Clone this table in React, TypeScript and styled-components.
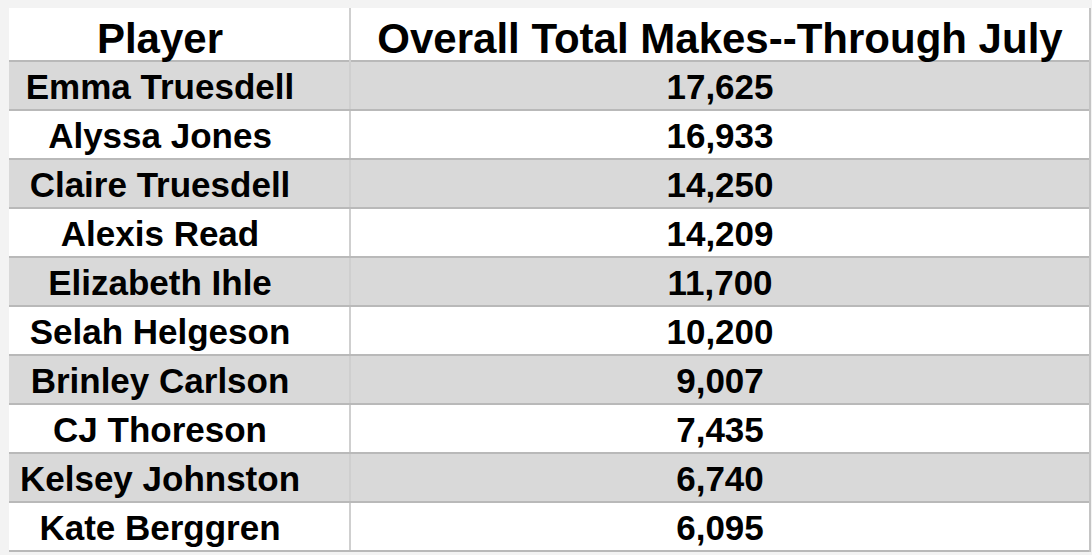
import React from "react";
import styled, { createGlobalStyle } from "styled-components";

const GlobalStyle = createGlobalStyle`
  html, body {
    margin: 0;
    padding: 0;
    background: #f3f3f3;
  }
  body {
    font-family: "Liberation Sans", Arial, sans-serif;
  }
`;

const Page = styled.div`
  width: 1092px;
  height: 555px;
  padding: 8px 1px 0 9px;
  box-sizing: border-box;
  overflow: hidden;
  background: #f3f3f3;
`;

const Sheet = styled.div`
  display: flex;
  flex-direction: column;
  border-right: 2px solid #c4c4c4;
  background: #ffffff;
`;

const Row = styled.div<{ $shaded?: boolean; $header?: boolean }>`
  display: grid;
  grid-template-columns: 342px 1fr;
  height: ${({ $header }) => ($header ? "54px" : "49px")};
  box-sizing: border-box;
  border-bottom: 2px solid #b9b9b9;
  background: ${({ $shaded }) => ($shaded ? "#d9d9d9" : "#ffffff")};
`;

const Cell = styled.div<{ $header?: boolean; $first?: boolean }>`
  display: flex;
  align-items: center;
  justify-content: center;
  padding-right: ${({ $first }) => ($first ? "38px" : "0")};
  padding-top: ${({ $header }) => ($header ? "7px" : "2px")};
  border-right: ${({ $first }) => ($first ? "2px solid #cfcfcf" : "none")};
  font-weight: 700;
  font-size: ${({ $header }) => ($header ? "42px" : "35px")};
  color: #000000;
  white-space: nowrap;
  box-sizing: border-box;
`;

const players: [string, string][] = [
  ["Emma Truesdell", "17,625"],
  ["Alyssa Jones", "16,933"],
  ["Claire Truesdell", "14,250"],
  ["Alexis Read", "14,209"],
  ["Elizabeth Ihle", "11,700"],
  ["Selah Helgeson", "10,200"],
  ["Brinley Carlson", "9,007"],
  ["CJ Thoreson", "7,435"],
  ["Kelsey Johnston", "6,740"],
  ["Kate Berggren", "6,095"],
];

export default function App() {
  return (
    <>
      <GlobalStyle />
      <Page>
        <Sheet>
          <Row $header>
            <Cell $header $first>Player</Cell>
            <Cell $header>Overall Total Makes--Through July</Cell>
          </Row>
          {players.map(([name, total], i) => (
            <Row key={name} $shaded={i % 2 === 0}>
              <Cell $first>{name}</Cell>
              <Cell>{total}</Cell>
            </Row>
          ))}
        </Sheet>
      </Page>
    </>
  );
}
